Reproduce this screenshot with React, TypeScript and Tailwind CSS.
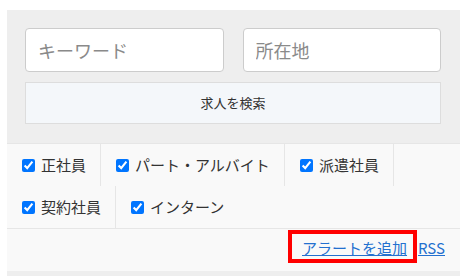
import React from 'react';

const jobTypes = ['正社員', 'パート・アルバイト', '派遣社員', '契約社員', 'インターン'];

export default function App() {
  return (
    <div
      className="w-[469px] h-[276px] bg-white pt-[10px] pl-[7px] overflow-hidden"
      style={{ fontFamily: '"Noto Sans CJK JP", "Noto Sans", sans-serif' }}
    >
      <div className="w-[453px] bg-[#eeeeee] pb-[6px]">
        {/* Search */}
        <div className="pl-[18px] pr-[19px] pt-[18px] pb-[19px]">
          <div className="grid grid-cols-2 gap-[19px]">
            <input
              placeholder="キーワード"
              className="h-[44px] w-full rounded-[4px] border border-[#cccccc] bg-white px-[12px] text-[18px] text-[#333] placeholder:text-[#8a8a8a] outline-none"
            />
            <input
              placeholder="所在地"
              className="h-[44px] w-full rounded-[4px] border border-[#cccccc] bg-white px-[12px] text-[18px] text-[#333] placeholder:text-[#8a8a8a] outline-none"
            />
          </div>
          <button className="mt-[10px] h-[42px] w-full border border-[#dddddd] bg-[#f4f7fa] text-[13px] text-[#333]">
            求人を検索
          </button>
        </div>

        {/* Filters */}
        <div className="flex flex-wrap border-t border-b border-[#e6e6e6] bg-[#f9f9f9]">
          {jobTypes.map((t, i) => (
            <label
              key={t}
              className={`flex h-[42px] items-center gap-[6px] pl-[15px] pr-[14px] text-[15px] text-[#333] ${
                i === jobTypes.length - 1 ? '' : 'border-r border-[#e6e6e6]'
              }`}
            >
              <input type="checkbox" defaultChecked className="h-[13px] w-[13px]" />
              <span>{t}</span>
            </label>
          ))}
        </div>

        {/* Links */}
        <div className="flex h-[42px] items-baseline justify-end bg-[#f9f9f9] pt-[1px] pr-[15px] text-[15px]">
          <span className="inline-block border-[4px] border-[#ff0000] pl-[10px] pr-[6px] pt-[4px] pb-[1px] leading-[20px]">
            <a href="#" className="text-[#2370cf] underline">
              アラートを追加
            </a>
          </span>
          <a href="#" className="ml-[1px] leading-[20px] text-[#2370cf] underline">
            RSS
          </a>
        </div>
      </div>
    </div>
  );
}
